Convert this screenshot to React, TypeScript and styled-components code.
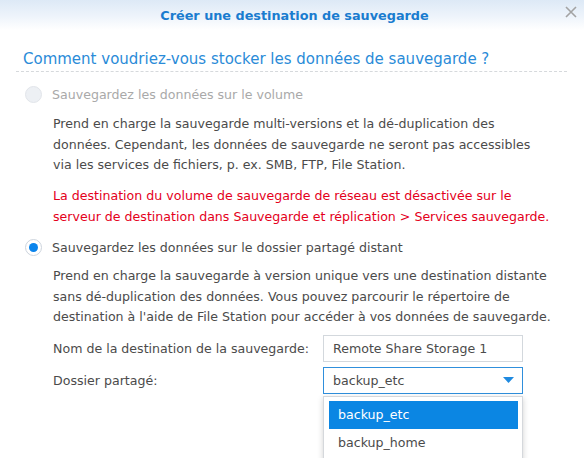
import React from "react";
import styled, { createGlobalStyle } from "styled-components";

const GlobalStyle = createGlobalStyle`
	html, body {
		margin: 0;
		padding: 0;
		background: #ffffff;
	}
	body {
		font-family: "DejaVu Sans", Verdana, sans-serif;
	}
`;

const Window = styled.div`
	width: 584px;
	height: 458px;
	overflow: hidden;
	background: #ffffff;
`;

const Header = styled.div`
	height: 30px;
	display: grid;
	grid-template-columns: 1fr auto 1fr;
	align-items: center;
	background: linear-gradient(to bottom, #dde9f6 0%, #eef4fb 55%, #ffffff 100%);
`;

const Title = styled.div`
	grid-column: 2;
	font-size: 12.8px;
	font-weight: bold;
	color: #1a7ccf;
	padding-top: 1px;
	padding-left: 5px;
`;

const CloseButton = styled.button`
	grid-column: 3;
	justify-self: end;
	width: 26px;
	height: 26px;
	margin-top: -6px;
	padding: 0;
	border: none;
	background: transparent;
	display: flex;
	align-items: center;
	justify-content: center;
	cursor: pointer;
`;

const Body = styled.div`
	padding: 0 17px 0 16px;
`;

const Heading = styled.h2`
	margin: 19px 0 0;
	padding: 0 0 2px 7px;
	font-size: 15px;
	font-weight: normal;
	line-height: 20px;
	color: #2a8bd8;
	border-bottom: 1px dashed #d6d9dc;
`;

const Option = styled.label<{ $disabled?: boolean }>`
	display: flex;
	align-items: center;
	gap: 10px;
	height: 20px;
	margin-top: ${(p) => (p.$disabled ? "12px" : "10px")};
	padding-left: 9px;
	font-size: 12.6px;
	color: ${(p) => (p.$disabled ? "#a9a9a9" : "#4b4b4b")};
`;

const Radio = styled.span<{ $checked?: boolean; $disabled?: boolean }>`
	box-sizing: border-box;
	width: 17px;
	height: 17px;
	border-radius: 50%;
	flex-shrink: 0;
	border: 1px solid ${(p) => (p.$disabled ? "#e2e5ea" : "#cdd4dd")};
	background: ${(p) => (p.$disabled ? "#edf0f4" : "#ffffff")};
	display: flex;
	align-items: center;
	justify-content: center;

	&::after {
		content: "";
		display: ${(p) => (p.$checked ? "block" : "none")};
		width: 9px;
		height: 9px;
		border-radius: 50%;
		background: #0a84ec;
	}
`;

const Desc = styled.p<{ $warn?: boolean; $gap?: number }>`
	margin: ${(p) => p.$gap ?? 10}px 0 0;
	padding-left: 37px;
	font-size: 12.6px;
	line-height: 20.5px;
	color: ${(p) => (p.$warn ? "#e4001b" : "#4b4b4b")};
	white-space: nowrap;
`;

const Form = styled.div`
	margin-top: 7px;
	padding-left: 37px;
	display: grid;
	grid-template-columns: 270px 200px;
	row-gap: 5px;
	align-items: center;
`;

const FieldLabel = styled.div`
	font-size: 12.6px;
	color: #4b4b4b;
`;

const TextInput = styled.div`
	box-sizing: border-box;
	height: 27px;
	border: 1px solid #d3d8dd;
	padding: 0 9px;
	display: flex;
	align-items: center;
	font-size: 12.6px;
	color: #4b4b4b;
`;

const SelectWrap = styled.div`
	position: relative;
`;

const SelectBox = styled.div`
	box-sizing: border-box;
	height: 27px;
	border: 1px solid #2f8fdc;
	padding: 0 8px 0 9px;
	display: flex;
	align-items: center;
	justify-content: space-between;
	font-size: 12.6px;
	color: #4b4b4b;
`;

const Menu = styled.ul`
	position: absolute;
	top: 29px;
	left: 0;
	box-sizing: border-box;
	width: 200px;
	height: 80px;
	margin: 0;
	padding: 4px 4px 0 5px;
	list-style: none;
	background: #ffffff;
	border: 1px solid #d5d8dc;
	box-shadow: 0 2px 6px rgba(0, 0, 0, 0.18);
`;

const MenuItem = styled.li<{ $active?: boolean }>`
	height: 28px;
	display: flex;
	align-items: center;
	padding-left: 9px;
	font-size: 12.6px;
	color: ${(p) => (p.$active ? "#ffffff" : "#4b4b4b")};
	background: ${(p) => (p.$active ? "#0b86e3" : "transparent")};
`;

const App: React.FC = () => {
	return (
		<>
			<GlobalStyle />
			<Window>
				<Header>
					<Title>Créer une destination de sauvegarde</Title>
					<CloseButton aria-label="Fermer">
						<svg width="12" height="12" viewBox="0 0 12 12">
							<path d="M1 1 L11 11 M11 1 L1 11" stroke="#a3a3a3" strokeWidth="1.6" />
						</svg>
					</CloseButton>
				</Header>
				<Body>
					<Heading>Comment voudriez-vous stocker les données de sauvegarde ?</Heading>

					<Option $disabled>
						<Radio $disabled />
						Sauvegardez les données sur le volume
					</Option>
					<Desc>
						Prend en charge la sauvegarde multi-versions et la dé-duplication des
						<br />
						données. Cependant, les données de sauvegarde ne seront pas accessibles
						<br />
						via les services de fichiers, p. ex. SMB, FTP, File Station.
					</Desc>
					<Desc $warn $gap={10.5}>
						La destination du volume de sauvegarde de réseau est désactivée sur le
						<br />
						serveur de destination dans Sauvegarde et réplication &gt; Services sauvegarde.
					</Desc>

					<Option>
						<Radio $checked />
						Sauvegardez les données sur le dossier partagé distant
					</Option>
					<Desc $gap={9}>
						Prend en charge la sauvegarde à version unique vers une destination distante
						<br />
						sans dé-duplication des données. Vous pouvez parcourir le répertoire de
						<br />
						destination à l'aide de File Station pour accéder à vos données de sauvegarde.
					</Desc>

					<Form>
						<FieldLabel>Nom de la destination de la sauvegarde:</FieldLabel>
						<TextInput>Remote Share Storage 1</TextInput>
						<FieldLabel>Dossier partagé:</FieldLabel>
						<SelectWrap>
							<SelectBox>
								backup_etc
								<svg width="11" height="6" viewBox="0 0 11 6">
									<path d="M0 0 H11 L5.5 6 Z" fill="#1f8ae0" />
								</svg>
							</SelectBox>
							<Menu>
								<MenuItem $active>backup_etc</MenuItem>
								<MenuItem>backup_home</MenuItem>
							</Menu>
						</SelectWrap>
					</Form>
				</Body>
			</Window>
		</>
	);
};

export default App;
